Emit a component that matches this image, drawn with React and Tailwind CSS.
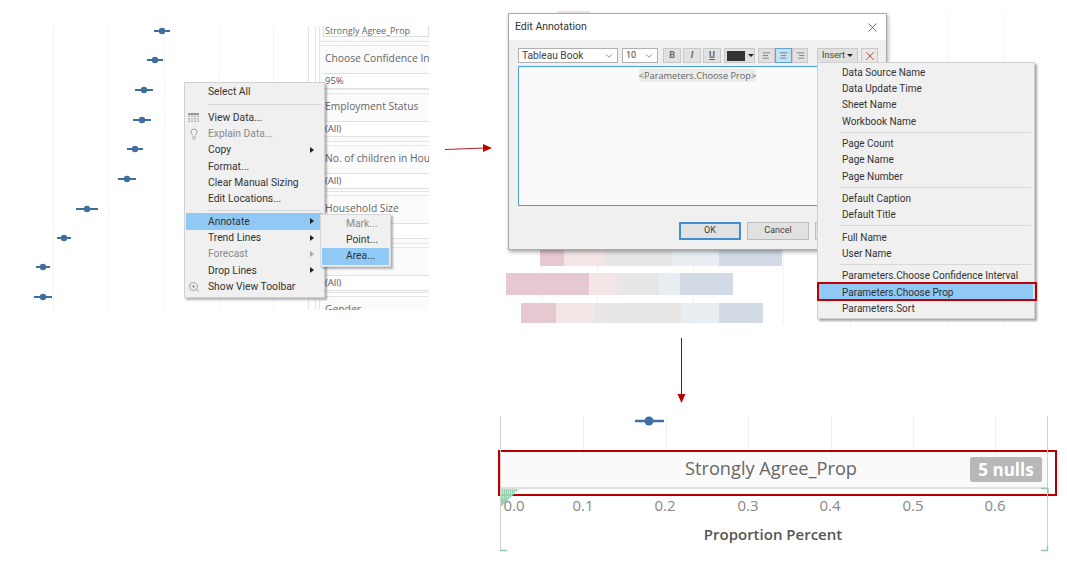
import React from 'react';
import { X, ChevronDown, Lightbulb, ZoomIn, AlignLeft, AlignCenter, AlignRight } from 'lucide-react';

const openSans = { fontFamily: '"Open Sans", "Noto Sans", sans-serif' };
const roboto = { fontFamily: 'Roboto, "Open Sans", sans-serif' };

const dots = [
  [162, 31, 8], [155, 60, 8], [144, 90, 9], [142, 120, 9], [135, 149, 8],
  [127, 179, 9], [87, 209, 11], [64, 238, 7], [43, 267, 7], [43, 297, 9],
];

const TableIcon = ({ className }) => (
  <svg className={className} width="11" height="9" viewBox="0 0 11 9">
    <rect width="11" height="2" fill="#9a9a9a" />
    {[0, 3, 6, 9].map((x) => [3, 5.5, 8].map((y) => (
      <rect key={`${x}-${y}`} x={x} y={y - 0.5} width="2" height="1.5" fill="#b5b5b5" />
    )))}
  </svg>
);

const Row = ({ label, muted, active, arrow, icon: Icon, inset = 'pl-[22px]' }) => (
  <div className={`relative h-[16.33px] ${inset} pr-2 flex items-center whitespace-nowrap ${active ? 'bg-[#90c8f6]' : ''} ${muted ? 'text-[#8a8a8a]' : 'text-[#333]'}`}>
    {Icon && <Icon size={12} strokeWidth={1.5} className="absolute left-[2px] text-[#888]" />}
    {label}
    {arrow && <span className={`absolute right-[9px] w-0 h-0 border-y-[3px] border-y-transparent border-l-[4px] ${muted ? 'border-l-[#aaa]' : 'border-l-[#222]'}`} />}
  </div>
);

const Sep = ({ className = '' }) => <div className={`h-px bg-[#d8d8d8] ml-[21px] mr-[2px] ${className}`} />;

const FilterCard = ({ title, value, height }) => (
  <div className={`shrink-0 bg-[#fbfbfb] border border-r-0 border-[#e6e6e6] pl-[3px] ${height}`}>
    <div className="h-[27px] pt-[5px] pl-[2px] text-[10.3px] leading-[14px] text-[#666] whitespace-nowrap overflow-hidden">{title}</div>
    {value && <div className="bg-white border-y border-[#e0e0e0] h-[16px] pl-[2px] text-[9.5px] leading-[14px] text-[#555] whitespace-nowrap">{value}</div>}
  </div>
);

const ToolBtn = ({ children, on, className = '' }) => (
  <div className={`h-[15px] flex items-center justify-center border ${on ? 'bg-[#c4e0f6] border-[#5aa7e0]' : 'bg-[#e1e1e1] border-[#c8c8c8]'} text-[#666] ${className}`}>{children}</div>
);

const Bar = ({ className, segs }) => (
  <div className={`absolute flex ${className}`}>{segs}</div>
);

const insertGroups = [
  ['Data Source Name', 'Data Update Time', 'Sheet Name', 'Workbook Name'],
  ['Page Count', 'Page Name', 'Page Number'],
  ['Default Caption', 'Default Title'],
  ['Full Name', 'User Name'],
];

const ticks = [['0.0', 514], ['0.1', 583], ['0.2', 665], ['0.3', 748], ['0.4', 830], ['0.5', 913], ['0.6', 995]];

export default function App() {
  return (
    <div className="relative w-[1067px] h-[569px] bg-white overflow-hidden text-[10.3px]" style={roboto}>
      {/* left chart */}
      <svg className="absolute left-0 top-0" width="310" height="320">
        {[53, 108, 164, 219, 273].map((x) => (
          <line key={x} x1={x + 0.5} x2={x + 0.5} y1="26" y2="310" stroke="#f3f3f3" />
        ))}
        {dots.map(([x, y, w]) => (
          <g key={y}>
            <line x1={x - w} x2={x + w} y1={y} y2={y} stroke="#3f6f9f" strokeWidth="2" />
            <circle cx={x} cy={y} r="3.2" fill="#3f6f9f" />
          </g>
        ))}
      </svg>

      {/* filter strip */}
      <div className="absolute left-[308px] top-[26px] h-[284px] w-[12px] border-x border-[#e4e4e4] flex justify-center">
        <div className="w-[4px] h-full border-r border-[#e8e8e8]" />
      </div>
      <div className="absolute left-[319px] top-[26px] w-[110px] h-[284px] overflow-hidden flex flex-col gap-[3px]" style={openSans}>
        <div className="shrink-0 h-[16px] bg-[#fbfbfb] border-b border-l border-[#e6e6e6] pl-[3px]">
          <div className="h-[11px] bg-white border-x border-b border-[#ddd] pl-[1px] text-[9px] leading-[10px] text-[#666] whitespace-nowrap">Strongly Agree_Prop</div>
        </div>
        <FilterCard height="h-[45px]" title="Choose Confidence Interval" value="95%" />
        <FilterCard height="h-[49px]" title="Employment Status" value="(All)" />
        <FilterCard height="h-[47px]" title="No. of children in Household" value="(All)" />
        <FilterCard height="h-[49px]" title="Household Size" value="(All)" />
        <FilterCard height="h-[46px]" title="" value="(All)" />
        <FilterCard height="h-[26px]" title="Gender" />
      </div>

      {/* context menu */}
      <div className="absolute left-[184px] top-[82px] w-[141px] h-[216px] bg-[#f0f0f0] border border-[#d0d0d0] shadow-[2px_2px_2px_rgba(0,0,0,0.3)] pt-px px-px">
        <Row label="Select All" />
        <Sep className="my-[4px]" />
        <Row label="View Data..." icon={TableIcon} />
        <Row label="Explain Data..." muted icon={Lightbulb} />
        <Row label="Copy" arrow />
        <Row label="Format..." />
        <Row label="Clear Manual Sizing" />
        <Row label="Edit Locations..." />
        <Sep className="my-[2.5px]" />
        <Row label="Annotate" arrow active />
        <Row label="Trend Lines" arrow />
        <Row label="Forecast" arrow muted />
        <Row label="Drop Lines" arrow />
        <Row label="Show View Toolbar" icon={ZoomIn} />
      </div>
      <div className="absolute left-[320px] top-[214px] w-[71px] h-[53px] bg-[#f0f0f0] border border-[#d8d8d8] shadow-[2px_2px_2px_rgba(0,0,0,0.3)] px-[1px] flex flex-col justify-center">
        <div className="h-[16.33px] pl-[24px] leading-[16px] text-[#8a8a8a]">Mark...</div>
        <div className="h-[16.33px] pl-[24px] leading-[16px] text-[#333]">Point...</div>
        <div className="h-[17px] pl-[24px] leading-[16px] text-[#333] bg-[#90c8f6]">Area...</div>
      </div>

      {/* arrows */}
      <svg className="absolute left-0 top-0 pointer-events-none" width="1067" height="569">
        <line x1="445" y1="149.5" x2="485" y2="148" stroke="#b02020" />
        <path d="M483 144 L492 148 L483 152 Z" fill="#c00000" />
        <line x1="681.5" y1="338" x2="681.5" y2="396" stroke="#7a1010" />
        <path d="M677.5 394 L681.5 403 L685.5 394 Z" fill="#c00000" />
      </svg>

      {/* sheet behind the dialog */}
      <svg className="absolute left-[500px] top-0" width="560" height="330">
        {[42, 97, 193, 283, 350, 448, 503].map((x) => (
          <line key={x} x1={x + 0.5} x2={x + 0.5} y1="240" y2="325" stroke="#f3f3f3" />
        ))}
        {[448, 503].map((x) => (
          <line key={x} x1={x + 0.5} x2={x + 0.5} y1="13" y2="62" stroke="#f3f3f3" />
        ))}
      </svg>
      <div className="absolute left-[557px] top-[11px] w-[33px] h-[2px] bg-[#f3e6ea]" />
      <Bar className="left-[540px] top-[249px] h-[17px]" segs={<>
        <div className="w-[24px] bg-[#e5c8d0]" /><div className="w-[40px] bg-[#f4e6e6]" /><div className="w-[68px] bg-[#e8e6e7]" /><div className="w-[47px] bg-[#e8eef2]" /><div className="w-[63px] bg-[#d2dbe5]" />
      </>} />
      <Bar className="left-[506px] top-[273px] h-[22px]" segs={<>
        <div className="w-[83px] bg-[#e5c8d0]" /><div className="w-[28px] bg-[#f4e6e6]" /><div className="w-[42px] bg-[#e8e6e7]" /><div className="w-[21px] bg-[#e8eef2]" /><div className="w-[53px] bg-[#d2dbe5]" />
      </>} />
      <Bar className="left-[521px] top-[303px] h-[20px]" segs={<>
        <div className="w-[35px] bg-[#e5c8d0]" /><div className="w-[38px] bg-[#f4e6e6]" /><div className="w-[87px] bg-[#e8e6e7]" /><div className="w-[38px] bg-[#e8eef2]" /><div className="w-[44px] bg-[#d2dbe5]" />
      </>} />

      {/* edit annotation dialog */}
      <div className="absolute left-[508px] top-[13px] w-[379px] h-[237px] bg-[#f0f0f0] border border-[#aaa] shadow-[1px_2px_4px_rgba(0,0,0,0.35)] flex flex-col">
        <div className="h-[26px] bg-white flex items-center justify-between pl-[6px] pr-[6px] text-[10.5px] text-[#333] shrink-0">
          Edit Annotation
          <X size={15} strokeWidth={1.1} className="text-[#333]" />
        </div>
        <div className="flex items-center pl-[9px] pt-[8px] h-[23px] shrink-0">
          <div className="w-[100px] h-[15px] bg-white border border-[#b0b0b0] flex items-center justify-between px-[3px] text-[10.2px] text-[#444]">Tableau Book<ChevronDown size={10} className="text-[#777]" /></div>
          <div className="ml-[4px] w-[36px] h-[15px] bg-white border border-[#b0b0b0] flex items-center justify-between px-[3px] text-[9px] text-[#444]">10<ChevronDown size={10} className="text-[#777]" /></div>
          <ToolBtn className="ml-[5px] w-[18px] text-[9px] font-bold">B</ToolBtn>
          <ToolBtn className="ml-[2px] w-[18px] text-[9px] font-bold italic">I</ToolBtn>
          <ToolBtn className="ml-[2px] w-[18px] text-[9px] font-bold underline">U</ToolBtn>
          <div className="ml-[3px] w-[31px] h-[15px] bg-[#e1e1e1] border border-[#c8c8c8] flex items-center pl-[2px] gap-[3px]">
            <div className="w-[18px] h-[10px] bg-[#333]" />
            <span className="w-0 h-0 border-x-[3px] border-x-transparent border-t-[3px] border-t-[#222]" />
          </div>
          <ToolBtn className="ml-[3px] w-[17px]"><AlignLeft size={9} strokeWidth={2} /></ToolBtn>
          <ToolBtn on className="w-[17px]"><AlignCenter size={9} strokeWidth={2} /></ToolBtn>
          <ToolBtn className="w-[16px]"><AlignRight size={9} strokeWidth={2} /></ToolBtn>
          <div className="ml-[9px] w-[41px] h-[15px] bg-[#e1e1e1] border border-[#c8c8c8] flex items-center justify-center gap-[2px] text-[9px] text-[#444]">
            Insert<span className="w-0 h-0 border-x-[3px] border-x-transparent border-t-[3px] border-t-[#222]" />
          </div>
          <div className="ml-[3px] w-[17px] h-[15px] bg-[#e8e8e8] border border-[#c8c8c8] flex items-center justify-center">
            <X size={14} strokeWidth={1.5} className="text-[#c0392b]" />
          </div>
        </div>
        <div className="ml-[9px] mt-[3px] w-[359px] h-[140px] bg-[#fafafa] border border-[#4a9ede] flex justify-center pt-[2px] shrink-0">
          <div className="h-[13px] bg-[#ececec] text-[9.2px] leading-[13px] text-[#666] whitespace-nowrap" style={openSans}>&lt;Parameters.Choose Prop&gt;</div>
        </div>
        <div className="flex pl-[170px] pt-[16px]">
          <div className="w-[62px] h-[18px] border-2 border-[#3d8fd1] bg-[#e1e1e1] flex items-center justify-center text-[9px] text-[#444]">OK</div>
          <div className="ml-[6px] w-[62px] h-[18px] border border-[#bbb] bg-[#e1e1e1] flex items-center justify-center text-[9px] text-[#444]">Cancel</div>
          <div className="ml-[6px] w-[10px] h-[18px] border border-[#bbb] bg-[#e1e1e1]" />
        </div>
      </div>

      {/* insert menu */}
      <div className="absolute left-[817px] top-[62px] w-[218px] h-[257px] bg-[#f0f0f0] border border-[#d0d0d0] shadow-[2px_2px_2px_rgba(0,0,0,0.35)] pt-[1px] px-px text-[10px]">
        {insertGroups.map((g) => (
          <div key={g[0]}>
            {g.map((t) => <Row key={t} label={t} inset="pl-[23px]" />)}
            <Sep className="my-[2.5px]" />
          </div>
        ))}
        <Row label="Parameters.Choose Confidence Interval" inset="pl-[23px]" />
        <Row label="Parameters.Choose Prop" active inset="pl-[23px]" />
        <Row label="Parameters.Sort" inset="pl-[23px]" />
      </div>
      <div className="absolute left-[817px] top-[282px] w-[220px] h-[19px] border-[2px] border-[#c00000]" />

      {/* bottom chart */}
      <svg className="absolute left-0 top-0 pointer-events-none" width="1067" height="569">
        {[583, 666, 748, 831, 913, 995].map((x) => (
          <line key={x} x1={x + 0.5} x2={x + 0.5} y1="416" y2="488" stroke="#efefef" />
        ))}
        <line x1="636" y1="421" x2="663" y2="421" stroke="#3f6f9f" strokeWidth="2.5" strokeLinecap="round" />
        <circle cx="649" cy="421" r="4.5" fill="#3f6f9f" />
      </svg>
      <div className="absolute left-[498px] top-[450px] w-[559px] h-[46px] border-2 border-[#b80000]" style={openSans}>
        <div className="relative w-[547px] h-[37px] bg-[#f9f9f9]/80 border-b-2 border-[#e0e0e0] flex items-center justify-center pr-[5px] pb-px text-[18.2px] text-[#666]">
          Strongly Agree_Prop
          <div className="absolute right-[5px] top-[5px] w-[72px] h-[25px] rounded-[2px] bg-[#b8b8b8] flex items-center justify-center text-[17px] font-bold text-white">5 nulls</div>
        </div>
      </div>
      <svg className="absolute left-0 top-0 pointer-events-none" width="1067" height="569">
        <defs>
          <pattern id="hatch" width="2" height="2" patternUnits="userSpaceOnUse">
            <rect width="1.2" height="2" fill="#8fcfae" />
            <rect x="1.2" width="0.8" height="2" fill="#c4e6d4" />
          </pattern>
        </defs>
        <path d="M500.5 489 H519 L510 498 H500.5 Z" fill="url(#hatch)" />
        <path d="M500.5 498 H510 L500.5 507 Z" fill="#9ad4b6" />
        <line x1="500.5" y1="416" x2="500.5" y2="551" stroke="#cfcfcf" />
        <line x1="1047.5" y1="416" x2="1047.5" y2="551" stroke="#cfcfcf" />
        <path d="M500 550.5 H507 M1041 550.5 H1048 M1041 488.5 H1048 V494 M1047.5 546 V551" stroke="#8fc7ab" strokeWidth="1.5" fill="none" />
      </svg>
      {ticks.map(([t, x]) => (
        <div key={t} className="absolute top-[495px] -translate-x-1/2 text-[15px] leading-[20px] text-[#888]" style={{ left: x, ...openSans }}>{t}</div>
      ))}
      <div className="absolute left-[773px] top-[524px] -translate-x-1/2 text-[15px] leading-[20px] font-semibold text-[#555] whitespace-nowrap" style={openSans}>Proportion Percent</div>
    </div>
  );
}
